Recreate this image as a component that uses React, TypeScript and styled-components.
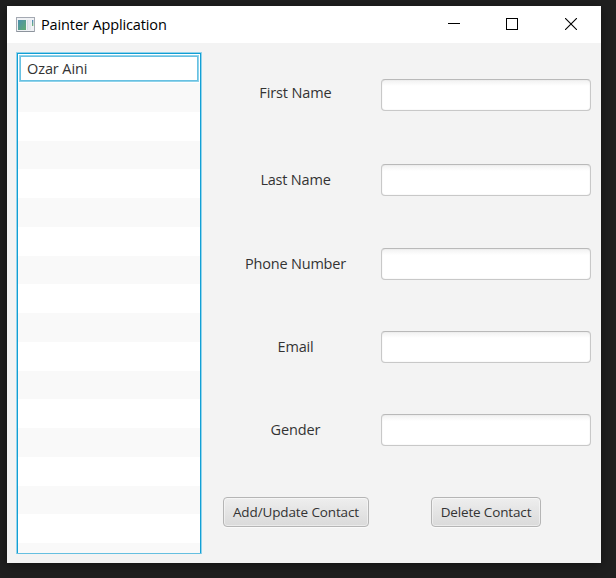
import React from "react";
import styled, { createGlobalStyle } from "styled-components";

const GlobalStyle = createGlobalStyle`
  * { box-sizing: border-box; }
  html, body { margin: 0; background: #1f1f1f; }
  body { overflow: hidden; font-family: "Open Sans", "Noto Sans", sans-serif; }
`;

const Desktop = styled.div`
  width: 616px;
  height: 578px;
  padding: 6px 15px 15px 7px;
  background: #1f1f1f;
`;

const Window = styled.main`
  width: 594px;
  height: 557px;
  display: flex;
  flex-direction: column;
  background: #f3f3f3;
  box-shadow: 0 2px 10px rgba(0, 0, 0, 0.4);
`;

const TitleBar = styled.header`
  height: 37px;
  flex: none;
  display: flex;
  align-items: center;
  background: #fff;
  padding: 0 1px 0 9px;
`;

const Title = styled.span`
  flex: 1;
  margin-left: 6px;
  font-size: 14.5px;
  line-height: 20px;
  letter-spacing: -0.12px;
  color: #000;
  white-space: nowrap;
`;

const WindowControls = styled.div`
  display: flex;
  height: 37px;
`;

const ControlButton = styled.button`
  width: 58.5px;
  height: 37px;
  padding: 0 0 1px;
  border: 0;
  background: transparent;
  display: flex;
  align-items: center;
  justify-content: center;
  svg { display: block; }
`;

const Content = styled.div`
  flex: 1;
  display: flex;
  padding: 9px 0 9px 9px;
`;

const ContactList = styled.ul`
  width: 186px;
  height: 502px;
  flex: none;
  margin: 0;
  padding: 1.25px 1px 0;
  list-style: none;
  overflow: hidden;
  background: #fff;
  border: 1px solid #93d3ea;
  border-bottom-color: #65bfe0;
  border-radius: 1px;
  box-shadow: inset 1px 0 0 #129fd5, inset -1px 0 0 #129fd5, inset 0 1px 0 #129fd5;
`;

const ListRow = styled.li<{ $shaded?: boolean; $focused?: boolean }>`
  height: 28.75px;
  padding: ${(p) => (p.$focused ? "0.75px 1px 0" : "0")};
  background: ${(p) => (p.$shaded ? "#f9f9f9" : "transparent")};
`;

const FocusCell = styled.div`
  height: 27px;
  padding-left: 7px;
  border: 1px solid #8fd2ea;
  box-shadow: inset 0 0 0 1px #68c1e2;
  color: #333;
  font-size: 14.5px;
  line-height: 25px;
  letter-spacing: -0.1px;
`;

const Form = styled.form`
  flex: 1;
  display: flex;
  flex-direction: column;
  padding: 27px 10px 0 8px;
`;

const FieldRow = styled.div<{ $gap: number }>`
  display: grid;
  grid-template-columns: 171px 210px;
  height: 32px;
  margin-bottom: ${(p) => p.$gap}px;
`;

const Label = styled.label<{ $lift: number; $spacing: number }>`
  padding-bottom: ${(p) => p.$lift}px;
  display: flex;
  align-items: center;
  justify-content: center;
  color: #333;
  font-size: 14.5px;
  line-height: 20px;
  letter-spacing: ${(p) => p.$spacing}px;
  white-space: nowrap;
`;

const TextInput = styled.input`
  width: 210px;
  height: 32px;
  padding: 4px 8px;
  outline: none;
  border: 1px solid #c8c8c8;
  border-top-color: #b9b9b9;
  border-radius: 4px;
  background: linear-gradient(#f1f1f1, #fff 6px);
  box-shadow: inset 0 0 1px #ccc;
  font: inherit;
`;

const Actions = styled.div`
  display: flex;
  gap: 62px;
  padding-left: 13px;
`;

const ActionButton = styled.button<{ $width: number; $spacing: number }>`
  width: ${(p) => p.$width}px;
  height: 30px;
  padding: 0 0 1px;
  border: 1px solid #b5b5b5;
  border-radius: 4px;
  background: linear-gradient(#eeeeee, #dadada);
  box-shadow: inset 0 0 0 1px rgba(255, 255, 255, 0.45), 0 1px 0 #fafafa;
  color: #333;
  font-family: inherit;
  font-size: 13.5px;
  line-height: 20px;
  letter-spacing: ${(p) => p.$spacing}px;
  white-space: nowrap;
`;

const AppIcon = () => (
  <svg width="19" height="16" viewBox="0 0 19 16">
    <defs>
      <linearGradient id="screen" x1="0" y1="0" x2="1" y2="1">
        <stop offset="0" stopColor="#4b8fae" />
        <stop offset="1" stopColor="#5faa72" />
      </linearGradient>
      <linearGradient id="strip" x1="0" y1="0" x2="0" y2="1">
        <stop offset="0" stopColor="#4f87bf" />
        <stop offset="1" stopColor="#71b777" />
      </linearGradient>
    </defs>
    <rect x="0.5" y="0.5" width="18" height="14" fill="#f0f2f5" stroke="#a4a9b2" />
    <path d="M1 14.5h17" stroke="#8d949d" />
    <rect x="2" y="3" width="8" height="10" fill="url(#screen)" />
    <path d="M11.5 3v10" stroke="#d3dae4" />
    <rect x="12" y="3" width="3" height="10" fill="#e5e9ef" />
    <rect x="16" y="3" width="1.3" height="6" fill="url(#strip)" />
  </svg>
);

const fields = [
  { id: "first", label: "First Name", lift: 4, gap: 53, spacing: -0.12 },
  { id: "last", label: "Last Name", lift: 0, gap: 52, spacing: -0.2 },
  { id: "phone", label: "Phone Number", lift: 0, gap: 51, spacing: -0.2 },
  { id: "email", label: "Email", lift: 0, gap: 51, spacing: -0.2 },
  { id: "gender", label: "Gender", lift: 0, gap: 51, spacing: -0.12 },
];

export default function App() {
  return (
    <Desktop>
      <GlobalStyle />
      <Window>
        <TitleBar>
          <AppIcon />
          <Title>Painter Application</Title>
          <WindowControls>
            <ControlButton aria-label="Minimize">
              <svg width="12" height="12" shapeRendering="crispEdges"><path d="M0 5.5h12" stroke="#000" /></svg>
            </ControlButton>
            <ControlButton aria-label="Maximize">
              <svg width="12" height="12" shapeRendering="crispEdges"><rect x=".5" y=".5" width="11" height="11" fill="none" stroke="#000" /></svg>
            </ControlButton>
            <ControlButton aria-label="Close">
              <svg width="12" height="12"><path d="M0 0L12 12M12 0L0 12" stroke="#000" strokeWidth="1.1" /></svg>
            </ControlButton>
          </WindowControls>
        </TitleBar>
        <Content>
          <ContactList>
            <ListRow $focused><FocusCell>Ozar Aini</FocusCell></ListRow>
            {Array.from({ length: 17 }, (_, i) => (
              <ListRow key={i} $shaded={i % 2 === 0} />
            ))}
          </ContactList>
          <Form onSubmit={(e) => e.preventDefault()}>
            {fields.map((f) => (
              <FieldRow key={f.id} $gap={f.gap}>
                <Label htmlFor={f.id} $lift={f.lift} $spacing={f.spacing}>{f.label}</Label>
                <TextInput id={f.id} />
              </FieldRow>
            ))}
            <Actions>
              <ActionButton $width={146} $spacing={-0.12}>Add/Update Contact</ActionButton>
              <ActionButton $width={110} $spacing={-0.15}>Delete Contact</ActionButton>
            </Actions>
          </Form>
        </Content>
      </Window>
    </Desktop>
  );
}
